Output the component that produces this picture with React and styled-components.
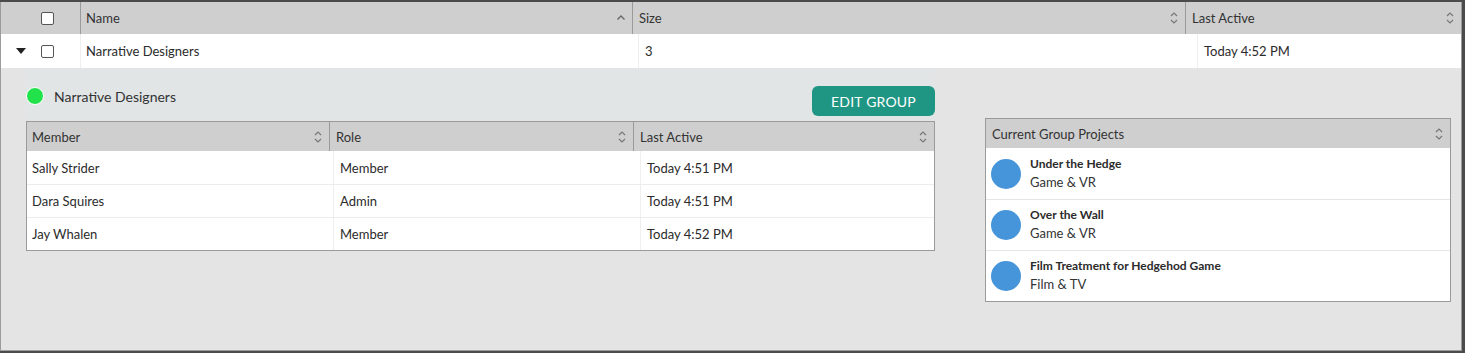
import styled, { createGlobalStyle } from 'styled-components';

const GlobalStyle = createGlobalStyle`
  html, body {
    margin: 0;
    padding: 0;
    background: #4b4b4b;
    font-family: 'Lato', 'Liberation Sans', sans-serif;
    color: #333333;
  }
  * { box-sizing: border-box; }
`;

const groups = [{ name: 'Narrative Designers', size: 3, lastActive: 'Today 4:52 PM' }];

const members = [
  { name: 'Sally Strider', role: 'Member', lastActive: 'Today 4:51 PM' },
  { name: 'Dara Squires', role: 'Admin', lastActive: 'Today 4:51 PM' },
  { name: 'Jay Whalen', role: 'Member', lastActive: 'Today 4:52 PM' },
];

const projects = [
  { title: 'Under the Hedge', type: 'Game & VR' },
  { title: 'Over the Wall', type: 'Game & VR' },
  { title: 'Film Treatment for Hedgehod Game', type: 'Film & TV' },
];

function SortIcon({ up }) {
  if (up) {
    return (
      <svg width="10" height="10" viewBox="0 0 10 10">
        <path d="M1.5 6.5 L5 3 L8.5 6.5" fill="none" stroke="#666" strokeWidth="1.3" />
      </svg>
    );
  }
  return (
    <svg width="10" height="14" viewBox="0 0 10 14">
      <path d="M2 5 L5 2 L8 5" fill="none" stroke="#777" strokeWidth="1.2" />
      <path d="M2 9 L5 12 L8 9" fill="none" stroke="#777" strokeWidth="1.2" />
    </svg>
  );
}

export default function App() {
  const group = groups[0];
  return (
    <>
      <GlobalStyle />
      <Frame>
        <MainHead>
          <Cell />
          <Cell $pad="6px"><Check /></Cell>
          <HeadCell $sep $padLeft="5px">Name<SortIcon up /></HeadCell>
          <HeadCell $sep>Size<SortIcon /></HeadCell>
          <HeadCell $sep>Last Active<SortIcon /></HeadCell>
        </MainHead>
        <MainRow>
          <Cell $center><Caret /></Cell>
          <Cell $pad="6px"><Check /></Cell>
          <BodyCell $sep $padLeft="5px">{group.name}</BodyCell>
          <BodyCell $sep>{group.size}</BodyCell>
          <BodyCell $sep>{group.lastActive}</BodyCell>
        </MainRow>

        <Expanded>
          <LeftCol>
            <GroupHeading>
              <GroupName>
                <Dot />
                {group.name}
              </GroupName>
              <EditButton>EDIT GROUP</EditButton>
            </GroupHeading>
            <Table>
              <SubHead $cols="302px 304px 1fr">
                <HeadCell $padLeft="5px">Member<SortIcon /></HeadCell>
                <HeadCell $sep>Role<SortIcon /></HeadCell>
                <HeadCell $sep>Last Active<SortIcon /></HeadCell>
              </SubHead>
              {members.map((m) => (
                <SubRow key={m.name} $cols="306px 307px 1fr">
                  <BodyCell $padLeft="5px">{m.name}</BodyCell>
                  <BodyCell $sep>{m.role}</BodyCell>
                  <BodyCell $sep>{m.lastActive}</BodyCell>
                </SubRow>
              ))}
            </Table>
          </LeftCol>

          <RightCol>
            <Table>
              <SubHead $cols="1fr">
                <HeadCell>Current Group Projects<SortIcon /></HeadCell>
              </SubHead>
              {projects.map((p) => (
                <ProjectRow key={p.title}>
                  <Avatar />
                  <div>
                    <ProjectTitle>{p.title}</ProjectTitle>
                    <ProjectType>{p.type}</ProjectType>
                  </div>
                </ProjectRow>
              ))}
            </Table>
          </RightCol>
        </Expanded>
      </Frame>
    </>
  );
}

const Frame = styled.div`
  margin: 2px 3px 2px 0;
  height: 349px;
  border: 1px solid #9c9c9c;
  border-top: 0;
  background: #e4e4e4;
  display: flex;
  flex-direction: column;
`;

const MainHead = styled.div`
  display: grid;
  grid-template-columns: 34px 45px 552px 553px 1fr;
  height: 32px;
  background: #cfcfcf;
`;

const MainRow = styled.div`
  display: grid;
  grid-template-columns: 34px 45px 558px 559px 1fr;
  height: 34px;
  background: #ffffff;
`;

const Cell = styled.div`
  display: flex;
  align-items: center;
  justify-content: ${(p) => (p.$center ? 'center' : 'flex-start')};
  padding-left: ${(p) => p.$pad || '0'};
`;

const HeadCell = styled.div`
  display: flex;
  align-items: center;
  justify-content: space-between;
  padding: 0 6px 0 ${(p) => p.$padLeft || '6px'};
  font-size: 13px;
  color: #333;
  border-left: ${(p) => (p.$sep ? '1px solid #9a9a9a' : '0')};
`;

const BodyCell = styled.div`
  display: flex;
  align-items: center;
  padding: 0 6px 0 ${(p) => p.$padLeft || '6px'};
  font-size: 13px;
  color: #2b2b2b;
  border-left: ${(p) => (p.$sep ? '1px solid #efefef' : '0')};
`;

const Check = styled.span`
  width: 13px;
  height: 13px;
  border: 1px solid #555;
  border-radius: 2px;
  background: #fff;
`;

const Caret = styled.span`
  width: 0;
  height: 0;
  border-left: 5px solid transparent;
  border-right: 5px solid transparent;
  border-top: 6px solid #222;
  margin-left: 5px;
`;

const Expanded = styled.div`
  flex: 1;
  display: flex;
  justify-content: space-between;
  padding: 0 10px 0 25px;
`;

const LeftCol = styled.div`
  width: 909px;
  display: flex;
  flex-direction: column;
`;

const GroupHeading = styled.div`
  height: 53px;
  background: #e1e5e6;
  display: flex;
  justify-content: space-between;
  align-items: flex-start;
  padding-top: 18px;
`;

const GroupName = styled.div`
  display: flex;
  align-items: center;
  gap: 10px;
  margin-top: 1px;
  font-size: 14px;
  color: #333;
`;

const Dot = styled.span`
  width: 18px;
  height: 18px;
  border-radius: 50%;
  background: #22e24b;
  border: 1px solid #ffffff;
`;

const EditButton = styled.button`
  width: 123px;
  height: 30px;
  border: 0;
  border-radius: 6px;
  background: #1f9683;
  color: #ffffff;
  font-family: 'Lato', 'Liberation Sans', sans-serif;
  font-size: 14px;
  letter-spacing: 0.2px;
  padding: 0;
`;

const Table = styled.div`
  border: 1px solid #9a9a9a;
  background: #ffffff;
`;

const SubHead = styled.div`
  display: grid;
  grid-template-columns: ${(p) => p.$cols};
  height: 29px;
  background: #cfcfcf;
`;

const SubRow = styled.div`
  display: grid;
  grid-template-columns: ${(p) => p.$cols};
  height: 33px;
  & + & { border-top: 1px solid #ececec; }
`;

const RightCol = styled.div`
  width: 466px;
  margin-top: 50px;
  align-self: flex-start;
`;

const ProjectRow = styled.div`
  display: flex;
  align-items: center;
  gap: 9px;
  height: 51px;
  padding: 0 5px;
  & + & { border-top: 1px solid #e6e6e6; }
`;

const Avatar = styled.span`
  width: 30px;
  height: 30px;
  border-radius: 50%;
  background: #4694d9;
  flex-shrink: 0;
`;

const ProjectTitle = styled.div`
  font-size: 12px;
  font-weight: 700;
  color: #2b2b2b;
  margin-bottom: 3px;
  margin-top: -2px;
`;

const ProjectType = styled.div`
  font-size: 13px;
  color: #333;
`;
